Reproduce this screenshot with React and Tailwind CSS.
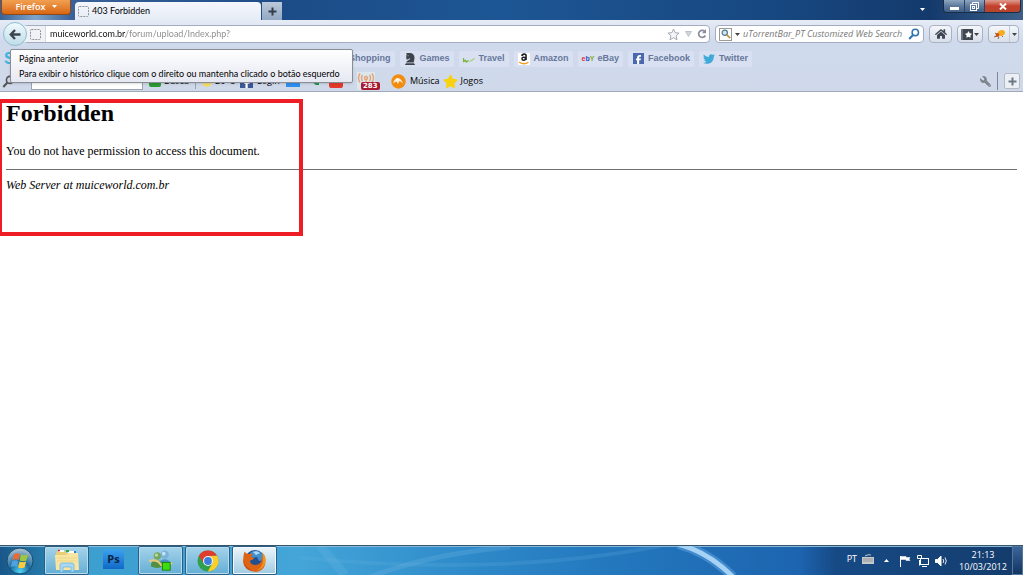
import { useState } from "react";
import { FaHome, FaApple } from "react-icons/fa";
import { FaFacebookF, FaTwitter, FaChessKnight, FaWrench, FaStar } from "react-icons/fa6";

const shortcuts = [
  { label: "Shopping", icon: <FaApple size={11} className="text-gray-500" /> },
  { label: "Games", icon: <FaChessKnight size={12} className="text-[#3f444c]" /> },
  { label: "Travel", icon: <TravelIcon /> },
  { label: "Amazon", icon: <AmazonIcon /> },
  { label: "eBay", icon: <EbayIcon /> },
  { label: "Facebook", icon: <FacebookIcon /> },
  { label: "Twitter", icon: <FaTwitter size={12} className="text-[#3fa9d8]" /> },
];

const taskButtons = [
  { name: "Windows Explorer", state: "open", icon: <ExplorerIcon /> },
  { name: "Photoshop", state: "pinned", icon: <PhotoshopIcon /> },
  { name: "Messenger", state: "open", icon: <MessengerIcon /> },
  { name: "Chrome", state: "open", icon: <ChromeIcon /> },
  { name: "Firefox", state: "active", icon: <FirefoxIcon /> },
];

const taskStates = {
  pinned: "border-transparent",
  open: "border-[#2c5f86] bg-gradient-to-b from-[#a4d3ea] to-[#64aed5] shadow-[inset_0_0_0_1px_#b5dcee]",
  active: "border-[#2c5f86] bg-gradient-to-b from-[#edf5fa] to-[#9fcbe4] shadow-[inset_0_0_0_1px_#f3f9fc]",
};

function AmazonIcon() {
  return (
    <svg width="12" height="12" viewBox="0 0 12 12" fill="none">
      <rect width="12" height="12" rx="1" fill="#fff" />
      <path d="M3.500 2.800Q6-0.200 8 2v5" stroke="#1c1c1c" strokeWidth="1.600" />
      <ellipse cx="5.700" cy="5.800" rx="1.800" ry="1.500" stroke="#1c1c1c" strokeWidth="1.400" />
      <path d="M1 9Q6 12.500 10.500 9.300" stroke="#f49b22" strokeWidth="1.400" />
    </svg>
  );
}

function EbayIcon() {
  return (
    <span className="w-3 text-[7px] leading-3 font-bold">
      <span className="text-[#e0323c]">e</span>
      <span className="text-[#2b4fc0]">b</span>
      <span className="text-[#7fae1e]">Y</span>
    </span>
  );
}

function FacebookIcon() {
  return (
    <span className="flex h-[11px] w-[11px] items-end justify-center bg-[#4a68ad]">
      <FaFacebookF size={9} className="text-white" />
    </span>
  );
}

function TravelIcon() {
  return (
    <svg width="12" height="12" viewBox="0 0 12 12" fill="none">
      <path d="M0.500 5v3.500l2-1 1 1.500 2-1.500" stroke="#7cb342" strokeWidth="1.400" />
      <path d="M6.500 8.500l2-1 3-2" stroke="#a6cf74" strokeWidth="1.200" />
    </svg>
  );
}

function DashedSquare() {
  return (
    <svg width="11" height="11" viewBox="0 0 11 11" fill="none" className="shrink-0">
      <rect x="0.5" y="0.5" width="10" height="10" rx="1" stroke="#8d929b" strokeDasharray="2 1" />
    </svg>
  );
}

function Caret({ className = "fill-[#444]" }) {
  return (
    <svg width="5" height="3" viewBox="0 0 5 3" className={className}>
      <path d="M0 0h5L2.5 3z" />
    </svg>
  );
}

function Loupe({ color, size = 12, flip = false }) {
  return (
    <svg width={size} height={size} viewBox="0 0 12 12" fill="none" stroke={color}>
      {flip ? (
        <>
          <circle cx="4.5" cy="4.5" r="3.2" fill="#cfe6f5" strokeWidth="1.4" />
          <path d="M7 7l4 4" stroke="#b8963c" strokeWidth="2" />
        </>
      ) : (
        <>
          <circle cx="7.3" cy="4.5" r="3.2" strokeWidth="1.5" />
          <path d="M5 7L1.2 11" strokeWidth="2" />
        </>
      )}
    </svg>
  );
}

function ExplorerIcon() {
  return (
    <svg width="26" height="24" viewBox="0 0 26 24">
      <path d="M2 4l1-2h8l1 2h11v17H2z" fill="#e9cf74" />
      <path d="M5 2h5M14 3h7" stroke="#fff" strokeWidth="2" />
      <path d="M4 1.5h2" stroke="#d33" strokeWidth="1.5" />
      <path d="M12 2h3" stroke="#38a838" strokeWidth="2" />
      <path d="M20 3h2" stroke="#2b7ad1" strokeWidth="2" />
      <path d="M1 6h11l2-2h10l1 17H2z" fill="#f7e6a2" />
      <path d="M3 9h20M3 12h20" stroke="#ecd483" />
      <path d="M6 23v-7q0-2 2-2h10q2 0 2 2v7h-3v-5H9v5z" fill="#a8d8f3" stroke="#6bb0db" strokeWidth="0.7" />
    </svg>
  );
}

function PhotoshopIcon() {
  return (
    <span className="mb-[3px] flex h-5 w-[21px] items-center justify-center bg-gradient-to-b from-[#3da2ee] to-[#0f69c8] text-[11px] font-bold text-[#0b2340]">
      Ps
    </span>
  );
}

function MessengerIcon() {
  return (
    <svg width="24" height="22" viewBox="0 0 26 24">
      <circle cx="17" cy="5" r="4.500" fill="#79b3dc" />
      <circle cx="16" cy="4" r="2" fill="#c8e2f3" />
      <path d="M11 17q0-7 6-7t7 7q-6 3-13 0z" fill="#4d8fc4" />
      <circle cx="9" cy="6.500" r="4" fill="#74a860" />
      <circle cx="8" cy="5.500" r="1.800" fill="#b9dba4" />
      <path d="M2 18q0-7 6-7t7 7q-6 3-13 0z" fill="#4f9140" />
      <path d="M0 12q9-2 12 3t13-1" fill="none" stroke="#e9c87e" strokeWidth="2.400" />
      <rect x="14.500" y="13.500" width="8.500" height="8.500" fill="#3ddc10" stroke="#168008" />
    </svg>
  );
}

function ChromeIcon() {
  return (
    <svg width="22" height="22" viewBox="0 0 22 22">
      <circle cx="11" cy="11" r="10.500" fill="#2fa04b" />
      <path d="M1.900 5.800A10.500 10.500 0 0 1 20.100 5.800L11 6L6.700 13.500z" fill="#df3c2e" />
      <path d="M20.100 5.800A10.500 10.500 0 0 1 10.800 21.500L15.300 13.500L11 6z" fill="#fbcf2b" />
      <circle cx="11" cy="11" r="5" fill="#f3f6f8" />
      <circle cx="11" cy="11" r="3.900" fill="#3a7edb" />
    </svg>
  );
}

function FirefoxIcon() {
  return (
    <svg width="25" height="24" viewBox="0 0 25 24">
      <circle cx="13" cy="11" r="10" fill="#24508f" />
      <path d="M8 4q5-4 10-1 4 3 4 8l-5 1-2-4-5 1z" fill="#3f8ed0" />
      <path d="M11 3q4-2 7 1l-4 2z" fill="#a8d9f5" />
      <path d="M2.500 2.500Q4 5 7 5q3-1 4 0L9 7.500q2 1 3 2-2 2-4 2 0 4 5 4.500 4 0 6-3 1.500-3 0-6 5 3 4 9-2 6-9 7Q2 22 1 13 1 7 2.500 2.500z" fill="#dd6415" />
      <path d="M20 3q5 5 3.500 11-3 7-9 7.500 6-3 6.500-9.500 0-4-1-9z" fill="#f0941f" />
      <path d="M1.500 11q1 10 10.500 11.500Q3 19.500 1.500 11z" fill="#a93a12" />
    </svg>
  );
}

function StartOrb() {
  return (
    <button aria-label="Iniciar" className="relative ml-[6px] flex w-7 items-center justify-center">
      <svg width="28" height="28" viewBox="0 0 28 28">
        <defs>
          <radialGradient id="orb" cx="50%" cy="90%" r="85%">
            <stop offset="0" stopColor="#4fd4f5" />
            <stop offset="0.45" stopColor="#1c6a9f" />
            <stop offset="1" stopColor="#a5bfd0" />
          </radialGradient>
        </defs>
        <circle cx="14" cy="14" r="13" fill="url(#orb)" stroke="#174c70" />
        <path d="M8 7q3.500-1.700 6 0l-1.400 6q-3-1.500-6.100 0z" fill="#ea6a35" />
        <path d="M15 7.500q3.500 1.500 7 0l-1.600 6q-3.300 1.400-6.700 0z" fill="#9bc83f" />
        <path d="M6.300 14q3.200-1.500 6.100 0l-1.400 6q-3-1.500-6.200 0z" fill="#4ea2e0" />
        <path d="M13.500 14.500q3.400 1.400 6.700 0l-1.600 6q-3.200 1.400-6.500 0z" fill="#fbcb3a" />
      </svg>
    </button>
  );
}

function PlusIcon({ color }) {
  return (
    <svg width="9" height="9" viewBox="0 0 9 9" stroke={color} strokeWidth="2">
      <path d="M4.500 0.500v8M0.500 4.500h8" />
    </svg>
  );
}

function TitleBar() {
  return (
    <header className="flex h-5 items-start bg-[linear-gradient(90deg,#3a6298_0,#7fa3c8_35px,#3a6298_72px,#1c4c88_280px,#1d5694_500px,#174780_780px,#143a6c_930px,#3d5f88_100%)]">
      <button className="ml-px flex h-[15px] w-[70px] items-center justify-center gap-[6px] rounded-b-sm border border-t-0 border-[#8a4a1c] bg-gradient-to-b from-[#f0a050] to-[#d9660c] text-[9px] font-semibold text-white">
        Firefox
        <Caret className="mb-[2px] fill-white" />
      </button>
      <div className="ml-1 flex h-[18px] w-[186px] items-center gap-[3px] self-end rounded-t-sm bg-gradient-to-b from-[#f4f7fc] to-[#e6ecf6] pl-[3px] font-['Lato','Open_Sans',sans-serif] text-[9px] text-black">
        <DashedSquare />
        403 Forbidden
      </div>
      <button
        aria-label="Nova aba"
        className="ml-px flex h-[18px] w-5 items-center justify-center self-end bg-gradient-to-b from-[#bccada] to-[#93a8c3]"
      >
        <PlusIcon color="#333c4a" />
      </button>
      <div className="ml-auto flex items-start">
        <button aria-label="Listar abas" className="mt-2 mr-[18px] flex">
          <Caret className="fill-white" />
        </button>
        <div className="mr-[2px] flex h-[13px] overflow-hidden rounded-b-sm border border-t-0 border-[#1c2c44]">
          <button
            aria-label="Minimizar"
            className="flex w-[21px] items-center justify-center border-r border-[#2b4263] bg-gradient-to-b from-[#8fa6c0] via-[#5d7a9d] to-[#3f5f87]"
          >
            <span className="mt-1 h-[3px] w-[9px] bg-white"></span>
          </button>
          <button
            aria-label="Restaurar"
            className="flex w-5 items-center justify-center border-r border-[#2b4263] bg-gradient-to-b from-[#8fa6c0] via-[#5d7a9d] to-[#3f5f87]"
          >
            <svg width="9" height="9" viewBox="0 0 9 9" fill="none" stroke="#fff">
              <path d="M2.500 2V.5h6v6H7" />
              <rect x="0.500" y="2.500" width="6" height="6" />
              <rect x="2.500" y="4.500" width="2" height="2" />
            </svg>
          </button>
          <button
            aria-label="Fechar"
            className="flex w-[35px] items-center justify-center bg-gradient-to-b from-[#dd9c90] via-[#c4402b] to-[#b5462e]"
          >
            <svg width="8" height="7" viewBox="0 0 8 7" stroke="#fff" strokeWidth="2">
              <path d="M1 0.500l6 6M7 0.500l-6 6" />
            </svg>
          </button>
        </div>
      </div>
    </header>
  );
}

function NavBar() {
  const [url, setUrl] = useState("muiceworld.com.br/forum/upload/Index.php?");

  return (
    <div className="flex h-7 items-center gap-[5px] pr-1 pl-[3px]">
      <div className="flex min-w-0 flex-1 items-center">
        <button
          aria-label="Página anterior"
          className="z-10 flex h-6 w-6 shrink-0 items-center justify-center rounded-full border border-[#8dbdd2] bg-gradient-to-b from-[#f0fafd] to-[#c0dde9]"
        >
          <svg width="12" height="11" viewBox="0 0 12 11" fill="none" stroke="#3b4450" strokeWidth="2.400">
            <path d="M6 1L1.800 5.500L6 10M2 5.500h9.500" />
          </svg>
        </button>
        <div className="-ml-1 flex h-[18px] min-w-0 flex-1 items-center rounded-sm border border-[#a3adbf] bg-white pr-[2px]">
          <span className="flex h-4 w-[22px] shrink-0 items-center justify-end border-r border-[#d5d9e2] bg-[#f0f2f6] pr-1">
            <DashedSquare />
          </span>
          <input
            aria-label="Endereço"
            value={url}
            onChange={(e) => setUrl(e.target.value)}
            className="ml-1 min-w-0 flex-1 bg-[linear-gradient(90deg,#111_76px,#8a8a8a_76px)] bg-clip-text font-['Lato','Open_Sans',sans-serif] text-[9px] text-transparent outline-none"
          />
          <svg width="13" height="13" viewBox="0 0 13 13" fill="#f5f6f8" stroke="#a4a9b3">
            <path d="M6.500 1l1.600 3.700 4 .4-3 2.700.9 4-3.500-2.100L3 11.800l.9-4-3-2.700 4-.4z" />
          </svg>
          <svg width="7" height="6" viewBox="0 0 7 6" fill="#d3d8e0" stroke="#a9b1bd" strokeWidth="0.700" className="mx-[5px]">
            <path d="M0.500 0.500h6L3.500 5.500z" />
          </svg>
          <button aria-label="Recarregar">
            <svg width="10" height="10" viewBox="0 0 10 10" fill="none" stroke="#858e9b" strokeWidth="1.700">
              <path d="M7.500 2.300A3.500 3.500 0 1 0 8.300 6.500" />
              <path d="M9 0v4.300H5z" fill="#858e9b" stroke="none" />
            </svg>
          </button>
        </div>
      </div>
      <div className="flex h-[18px] w-[209px] shrink-0 items-center rounded-sm border border-[#a3adbf] bg-white px-[3px]">
        <button aria-label="Mecanismo de busca" className="flex items-center gap-[3px]">
          <span className="flex h-[13px] w-[13px] items-center justify-center border border-[#9a9a9a]">
            <Loupe color="#56788c" size={10} flip />
          </span>
          <Caret />
        </button>
        <input
          aria-label="Pesquisar"
          placeholder="uTorrentBar_PT Customized Web Search"
          className="ml-[3px] min-w-0 flex-1 text-[9px] italic outline-none placeholder:text-[#777]"
        />
        <Loupe color="#2e74b5" />
      </div>
      <button
        aria-label="Página inicial"
        className="flex h-[18px] w-[23px] items-center justify-center rounded-sm border border-[#a9b2c3] bg-gradient-to-b from-[#f4f6fa] to-[#d9dfea]"
      >
        <FaHome size={12} className="text-[#3f4753]" />
      </button>
      <button
        aria-label="Favoritos"
        className="flex h-[18px] w-[26px] items-center justify-center gap-px rounded-sm border border-[#a9b2c3] bg-gradient-to-b from-[#f4f6fa] to-[#d9dfea]"
      >
        <span className="flex h-[11px] w-3 items-center justify-center border-l-2 border-[#68717d] bg-[#3f4753]">
          <FaStar size={7} className="text-white" />
        </span>
        <Caret />
      </button>
      <button
        aria-label="Firebug"
        className="flex h-[18px] w-[31px] items-center rounded-sm border border-[#a9b2c3] bg-gradient-to-b from-[#f4f6fa] to-[#d9dfea]"
      >
        <span className="flex h-full w-[21px] items-center justify-center border-r border-[#c3cad7]">
          <svg width="13" height="11" viewBox="0 0 13 11">
            <path d="M2 4l3 2M5 10l1-2M9 8l1-1M1 8l3-1" stroke="#6d4b22" strokeWidth="0.800" />
            <ellipse cx="8.300" cy="4" rx="3.800" ry="2.800" fill="#f6ac1d" transform="rotate(-20 8.300 4)" />
            <circle cx="4.500" cy="6" r="1.900" fill="#ce4f18" />
          </svg>
        </span>
        <span className="flex flex-1 justify-center">
          <Caret />
        </span>
      </button>
    </div>
  );
}

function ShortcutBar() {
  return (
    <nav className="flex h-[21px] items-center gap-[5px] pl-1 font-['Liberation_Sans',Arial,sans-serif]">
      <span className="w-80 shrink text-[16px] leading-4 font-bold text-[#3fb4de]">S</span>
      {shortcuts.map((item) => (
        <a
          key={item.label}
          href="#"
          className="flex h-4 items-center gap-1 rounded-xs bg-[#d9e0f1] px-1 text-[9px] font-bold text-[#66779b]"
        >
          <span className="flex w-3 justify-center">{item.icon}</span>
          {item.label}
        </a>
      ))}
    </nav>
  );
}

function ToolBar() {
  return (
    <div className="flex h-[22px] items-center pt-[2px] pr-[3px] pl-[2px] text-[9px] text-black">
      <Loupe color="#555" size={13} />
      <input aria-label="Busca" className="ml-4 h-[17px] w-28 border border-[#9aa3b2] bg-white px-1" />
      <button className="ml-[6px] flex w-[46px] items-center gap-[3px]">
        <span className="h-[11px] w-3 rounded-xs bg-[#2b9a33]"></span>
        Busca
      </button>
      <span className="mr-[6px] h-4 w-px bg-[#9aa3b2]"></span>
      <span className="h-[11px] w-[10px] rounded-full bg-[#f2dc6d]"></span>
      <span className="ml-[3px] w-6">20°C</span>
      <button className="ml-px flex w-[45px] items-center gap-1">
        <span className="flex h-[13px] w-[13px] items-end justify-center bg-[#3b5998]">
          <FaFacebookF size={10} className="text-white" />
        </span>
        Login
      </button>
      <span className="ml-px h-3 w-[14px] bg-[#2f8fee]"></span>
      <svg width="12" height="12" viewBox="0 0 12 12" className="ml-[11px]" fill="#1f9a48">
        <path d="M1 4h3a2 2 0 1 1 4 0h3v4L8 7v3H5L1 7z" />
      </svg>
      <span className="ml-[6px] flex h-[13px] w-[14px] items-center justify-center rounded-xs bg-[#e23a2e] text-[6px] font-bold text-white">
        You
      </span>
      <span className="relative ml-[14px] h-[18px] w-[18px] bg-[#dde6ea]">
        <svg width="18" height="18" viewBox="0 0 18 18" fill="none" stroke="#e2a479" strokeWidth="1.400">
          <circle cx="9" cy="6" r="1.500" />
          <path d="M5.500 3q-2 3 0 6M12.500 3q2 3 0 6M3 1.500q-3 4.500 0 9M15 1.500q3 4.500 0 9M9 8v5" />
        </svg>
        <span className="absolute top-[10px] left-[4px] rounded-xs bg-[#a81a30] px-[2px] font-['DejaVu_Sans',sans-serif] text-[7px] leading-[8px] font-bold text-white">
          283
        </span>
      </span>
      <a href="#" className="ml-4 flex items-center gap-1">
        <svg width="15" height="15" viewBox="0 0 15 15">
          <circle cx="7.500" cy="7.500" r="7.200" fill="#f28c10" />
          <path d="M2 9.500Q4 3.500 7 4t5.500 6Q10 6.500 8 7.500L7 10 5.500 7.500Q3.500 8 2 9.500z" fill="#fff3dc" />
        </svg>
        Música
      </a>
      <a href="#" className="ml-[3px] flex items-center gap-[3px]">
        <FaStar size={15} className="text-[#f8d210]" />
        Jogos
      </a>
      <FaWrench size={11} className="ml-auto -scale-x-100 text-[#7f858f]" />
      <span className="mx-[6px] h-[18px] w-px bg-[#7d8696]"></span>
      <button
        aria-label="Adicionar"
        className="flex h-4 w-4 items-center justify-center rounded-xs border border-[#b3bac7] bg-[#eceff4]"
      >
        <PlusIcon color="#6f7986" />
      </button>
    </div>
  );
}

function Taskbar() {
  return (
    <footer className="relative flex h-[30px] items-stretch overflow-hidden border-t border-[#35566f] bg-[linear-gradient(90deg,#19578a_0,#2478a8_42px,#3c9fcf_90px,#43a5d8_300px,#2d88c8_480px,#2377bd_620px,#1d64af_800px,#164a85_835px,#143c6c_100%)]">
      <svg className="absolute inset-0 h-full w-full" viewBox="0 0 1023 30" preserveAspectRatio="none" fill="none">
        <path d="M0 0.500h1023" stroke="#8dbbd8" />
        <path d="M678-2q30 8 55 34" stroke="#5fa6e3" strokeWidth="10" opacity="0.500" />
        <path d="M678-2q30 8 55 34" stroke="#a6d2f6" strokeWidth="5" />
        <path d="M370 32q60-24 140-31" stroke="#6bb2e2" strokeWidth="5" opacity="0.300" />
        <path d="M320 0l25 30" stroke="#8dc9ea" strokeWidth="9" opacity="0.150" />
        <path d="M300 12q200 20 360-12" stroke="#6bb2e2" strokeWidth="4" opacity="0.200" />
      </svg>
      <StartOrb />
      <div className="relative ml-[10px] flex gap-[2px]">
        {taskButtons.map((task) => (
          <button
            key={task.name}
            aria-label={task.name}
            className={`flex w-[45px] items-center justify-center rounded-xs border ${taskStates[task.state]}`}
          >
            {task.icon}
          </button>
        ))}
      </div>
      <div className="relative ml-auto flex items-center text-[9px] text-white">
        <span className="mb-1">PT</span>
        <svg width="12" height="10" viewBox="0 0 12 10" className="mb-1 ml-[5px]">
          <path d="M0 3h12v7H0z" fill="#c5c9cb" />
          <path d="M3 2q3-2 6-1" stroke="#c5c9cb" fill="none" />
          <path d="M1.500 5h9M1.500 7h9" stroke="#666" strokeDasharray="1 1" />
        </svg>
        <svg width="5" height="3" viewBox="0 0 5 3" fill="#fff" className="ml-[10px]">
          <path d="M0 3h5L2.500 0z" />
        </svg>
        <svg width="12" height="12" viewBox="0 0 12 12" className="ml-[10px]">
          <path d="M1.500 1v11" stroke="#fff" />
          <path d="M2 1.500h5v1h4L10 4l1 1.500H7v-1H2z" fill="#fff" stroke="#fff" strokeWidth="0.500" />
        </svg>
        <svg width="12" height="12" viewBox="0 0 12 12" className="ml-[6px]" fill="none" stroke="#fff">
          <rect x="3.500" y="3.500" width="8" height="6" fill="#1a4378" />
          <path d="M5 11.500h5M2.500 5v5.500M0.500 0.500h4v3h-4z" />
        </svg>
        <svg width="13" height="12" viewBox="0 0 13 12" className="ml-[6px]" fill="none" stroke="#fff">
          <path d="M0.500 4.500h2L6 1v10L2.500 7.500h-2z" fill="#fff" />
          <path d="M8 4q1.500 2 0 4M10 2.500q2.600 3.500 0 7" strokeWidth="0.900" />
        </svg>
        <time className="ml-[10px] w-[50px] text-center leading-3">
          21:13
          <br />
          10/03/2012
        </time>
        <button
          aria-label="Mostrar área de trabalho"
          className="ml-1 h-full w-[11px] border border-[#54779f] bg-gradient-to-b from-[#3c659a] to-[#123562]"
        ></button>
      </div>
    </footer>
  );
}

export default function App() {
  return (
    <div className="flex min-h-screen flex-col bg-white font-['Open_Sans',sans-serif]">
      <TitleBar />
      <div className="relative border-b border-[#a2a9b8] bg-gradient-to-b from-[#e6ecf6] via-[#cfdaec] via-30% to-[#cfd9ea]">
        <NavBar />
        <ShortcutBar />
        <ToolBar />
        <div
          role="tooltip"
          className="absolute top-[29px] left-[10px] z-20 rounded-xs border border-[#8a8d94] bg-gradient-to-b from-white to-[#e6e8f2] py-px pr-3 pl-2 font-['Lato','Open_Sans',sans-serif] text-[9px] leading-[15px] whitespace-nowrap text-black shadow-sm"
        >
          <p>Página anterior</p>
          <p>Para exibir o histórico clique com o direito ou mantenha clicado o botão esquerdo</p>
        </div>
      </div>
      <main className="relative flex-1 px-[6px] pt-[7px] font-['Liberation_Serif',serif] text-xs leading-4 text-black">
        <h1 className="text-2xl leading-7 font-bold">Forbidden</h1>
        <p className="mt-4">You do not have permission to access this document.</p>
        <hr className="mt-[10px] border-[#707070]" />
        <address className="mt-[7px]">Web Server at muiceworld.com.br</address>
        <div className="absolute top-[7px] left-0 h-[137px] w-[303px] border-4 border-l-2 border-[#ee1c25]"></div>
      </main>
      <Taskbar />
    </div>
  );
}
